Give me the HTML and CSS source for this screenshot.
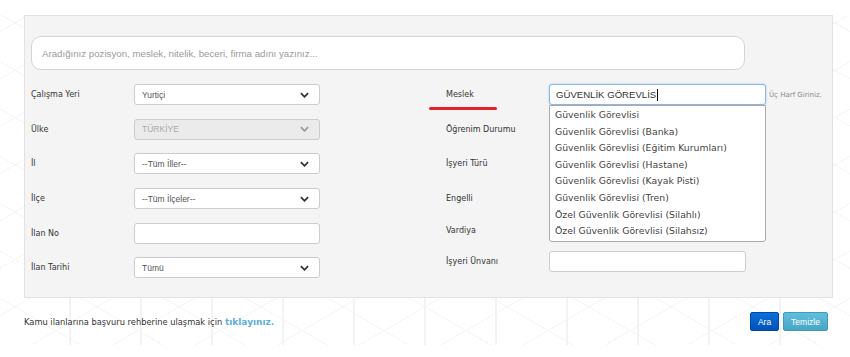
FILE: index.html
```html
<!DOCTYPE html>
<html lang="tr">
<head>
<meta charset="utf-8">
<title>İş Ara</title>
<link rel="stylesheet" href="styles.css">
</head>
<body>
<div class="page">
  <div class="panel">
    <div class="search"><span class="placeholder">Aradığınız pozisyon, meslek, nitelik, beceri, firma adını yazınız...</span></div>
    <div class="form">
      <div class="col col-left">
        <div class="row"><span class="label">Çalışma Yeri</span><div class="field select"><span>Yurtiçi</span><svg class="chev" viewBox="0 0 10 6"><path d="M1 1l4 4 4-4" /></svg></div></div>
        <div class="row"><span class="label">Ülke</span><div class="field select disabled"><span>TÜRKİYE</span><svg class="chev" viewBox="0 0 10 6"><path d="M1 1l4 4 4-4" /></svg></div></div>
        <div class="row"><span class="label">İl</span><div class="field select"><span>--Tüm İller--</span><svg class="chev" viewBox="0 0 10 6"><path d="M1 1l4 4 4-4" /></svg></div></div>
        <div class="row"><span class="label">İlçe</span><div class="field select"><span>--Tüm İlçeler--</span><svg class="chev" viewBox="0 0 10 6"><path d="M1 1l4 4 4-4" /></svg></div></div>
        <div class="row"><span class="label">İlan No</span><div class="field"></div></div>
        <div class="row"><span class="label">İlan Tarihi</span><div class="field select"><span>Tümü</span><svg class="chev" viewBox="0 0 10 6"><path d="M1 1l4 4 4-4" /></svg></div></div>
      </div>
      <div class="col col-right">
        <div class="row meslek-row">
          <span class="label">Meslek</span>
          <span class="underline"></span>
          <div class="field focus"><span class="typed">GÜVENLİK GÖREVLİS</span><span class="caret"></span>
            <ul class="dropdown">
              <li>Güvenlik Görevlisi</li>
              <li>Güvenlik Görevlisi (Banka)</li>
              <li>Güvenlik Görevlisi (Eğitim Kurumları)</li>
              <li>Güvenlik Görevlisi (Hastane)</li>
              <li>Güvenlik Görevlisi (Kayak Pisti)</li>
              <li>Güvenlik Görevlisi (Tren)</li>
              <li>Özel Güvenlik Görevlisi (Silahlı)</li>
              <li>Özel Güvenlik Görevlisi (Silahsız)</li>
            </ul>
          </div>
          <span class="hint">Üç Harf Giriniz.</span>
        </div>
        <div class="row"><span class="label">Öğrenim Durumu</span><div class="field"></div></div>
        <div class="row"><span class="label">İşyeri Türü</span><div class="field"></div></div>
        <div class="row"><span class="label">Engelli</span><div class="field"></div></div>
        <div class="row row-tight"><span class="label">Vardiya</span><div class="field"></div></div>
        <div class="row row-tight"><span class="label">İşyeri Ünvanı</span><div class="field short"></div></div>
      </div>
    </div>
  </div>
  <div class="footer">
    <p class="guide">Kamu ilanlarına başvuru rehberine ulaşmak için <a class="link">tıklayınız.</a></p>
    <div class="buttons">
      <span class="btn btn-primary">Ara</span>
      <span class="btn btn-info">Temizle</span>
    </div>
  </div>
</div>
</body>
</html>
```

FILE: styles.css
```css
* { box-sizing: border-box; }
html, body { margin: 0; padding: 0; background: #fff; }
body { font-family: "DejaVu Sans", Verdana, sans-serif; color: #333; }

.page {
  width: 850px;
  height: 345px;
  padding: 15px 0 0 24px;
  background-color: #fff;
  background-image:
    repeating-linear-gradient(90deg, transparent 0 69px, #f3f3f3 69px 71px),
    repeating-linear-gradient(30deg, transparent 0 40px, #f5f5f5 40px 41px),
    repeating-linear-gradient(-30deg, transparent 0 40px, #f5f5f5 40px 41px);
  background-position: 0 15px;
  background-repeat: no-repeat;
  background-size: 850px 330px;
}

.panel {
  width: 809px;
  height: 283px;
  background: #f4f4f4;
  border: 1px solid #e2e2e2;
  padding: 20px 0 0 6px;
}

.search {
  width: 714px;
  height: 34px;
  background: #fff;
  border: 1px solid #d4d4d4;
  border-radius: 10px;
  display: flex;
  align-items: center;
  padding-left: 10px;
}
.placeholder {
  font-family: "Liberation Sans", Arial, sans-serif;
  font-size: 9.7px;
  color: #9a9a9a;
}

.form {
  display: flex;
  margin-top: 14px;
}
.col { display: flex; flex-direction: column; }
.col-left { width: 415px; gap: 13.7px; }
.col-right { gap: 13.7px; }

.row {
  display: flex;
  align-items: center;
  height: 21px;
  position: relative;
}
.row-tight { margin-top: -3px; }
.label {
  width: 103px;
  font-size: 8px;
  color: #333;
}
.field {
  width: 186px;
  height: 21px;
  background: #fff;
  border: 1px solid #ccc;
  border-radius: 3px;
  display: flex;
  align-items: center;
  padding: 0 7px;
  font-family: "Liberation Sans", Arial, sans-serif;
  font-size: 8.5px;
  color: #555;
  position: relative;
}
.col-right .field { width: 217px; }
.col-right .field.short { width: 197px; }
.select { justify-content: space-between; }
.disabled { background: #ebebeb; color: #aaa; }
.chev {
  width: 9px;
  height: 6px;
  fill: none;
  stroke: #333;
  stroke-width: 2;
  margin-right: 3px;
}
.disabled .chev { stroke: #999; }

.field.focus {
  border-color: #8ab8e6;
  box-shadow: 0 0 2px rgba(102, 170, 230, 0.6);
  font-size: 9.6px;
  color: #333;
  padding-left: 6px;
  z-index: 2;
}
.caret {
  width: 1px;
  height: 12px;
  background: #000;
  margin-left: 1px;
}
.hint {
  font-size: 7px;
  color: #888;
  margin-left: 3px;
}
.underline {
  position: absolute;
  left: -17px;
  top: 23px;
  width: 68px;
  height: 3px;
  border-radius: 2px;
  background: #e3222b;
}

.dropdown {
  position: absolute;
  left: -1px;
  top: 20px;
  width: 217px;
  height: 137px;
  margin: 0;
  padding: 1px 0 0 0;
  list-style: none;
  background: #fff;
  border: 1px solid #a9a9a9;
  border-radius: 0 0 3px 3px;
  font-family: "DejaVu Sans", Verdana, sans-serif;
  font-size: 9.3px;
  color: #444;
}
.dropdown li {
  height: 16.6px;
  line-height: 16.6px;
  padding-left: 5px;
  white-space: nowrap;
}

.footer {
  width: 804px;
  display: flex;
  align-items: center;
  justify-content: space-between;
  margin-top: 14px;
}
.guide {
  margin: 0;
  font-size: 8.3px;
  color: #333;
}
.link {
  font-weight: bold;
  font-size: 9px;
  color: #5bb0d8;
}
.buttons { display: flex; gap: 4px; }
.btn {
  height: 19px;
  display: flex;
  align-items: center;
  justify-content: center;
  font-family: "Liberation Sans", Arial, sans-serif;
  font-size: 8.5px;
  color: #fff;
  border-radius: 2px;
}
.btn-primary {
  width: 29px;
  background: linear-gradient(#0b6fd9, #0052b8);
  border: 1px solid #0049a6;
}
.btn-info {
  width: 45px;
  background: linear-gradient(#62bedb, #47a6c7);
  border: 1px solid #3f9bbd;
}
```
